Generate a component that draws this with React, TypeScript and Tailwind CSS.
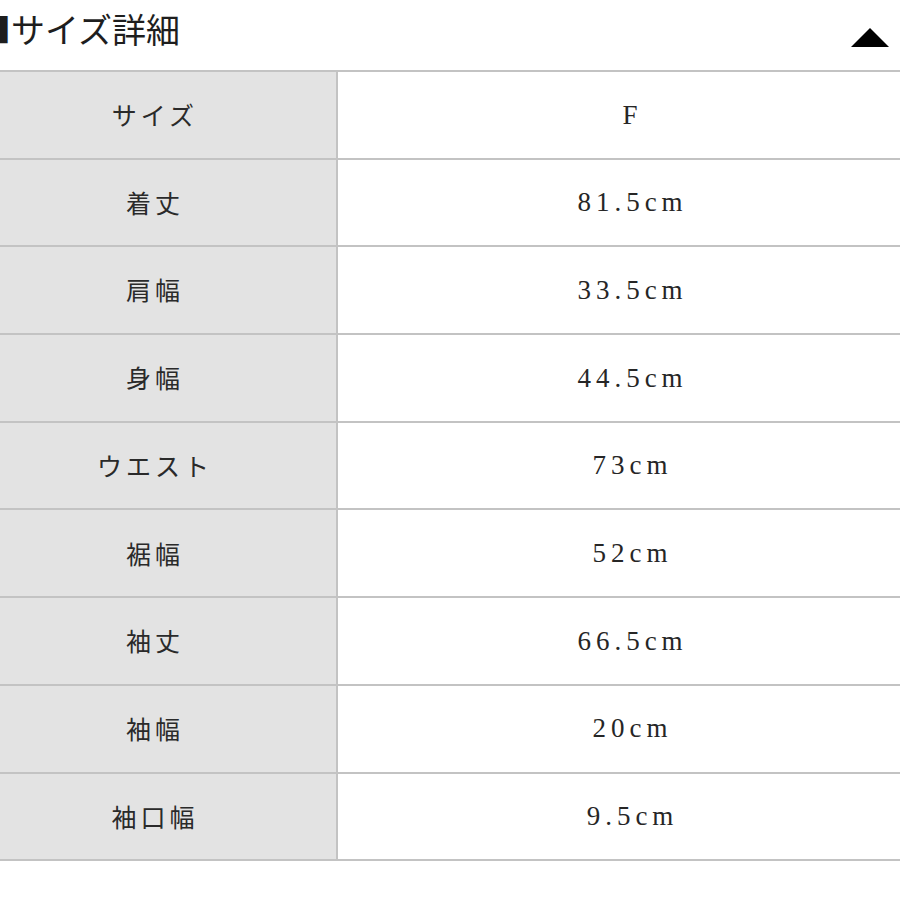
import React from "react";

const rows: [string, string][] = [
  ["サイズ", "F"],
  ["着丈", "81.5cm"],
  ["肩幅", "33.5cm"],
  ["身幅", "44.5cm"],
  ["ウエスト", "73cm"],
  ["裾幅", "52cm"],
  ["袖丈", "66.5cm"],
  ["袖幅", "20cm"],
  ["袖口幅", "9.5cm"],
];

const jp = { fontFamily: '"Liberation Serif", "Noto Sans CJK JP", serif' };

export default function App() {
  return (
    <div className="w-[900px] h-[900px] bg-white overflow-hidden relative" style={jp}>
      <div className="h-[70px] flex items-start justify-between">
        <div
          className="ml-[-23px] mt-[6px] text-[34px] leading-[46px] text-[#1e1e1e] whitespace-nowrap"
          style={{ fontFamily: '"Noto Sans CJK JP", serif' }}
        >
          ■サイズ詳細
        </div>
        <svg width="38" height="19" viewBox="0 0 38 19" className="mt-[28px] mr-[11px]">
          <polygon points="19,0 38,19 0,19" fill="#000" />
        </svg>
      </div>
      <div className="ml-[-30px] w-[952px] border-t-2 border-[#c3c3c3]">
        {rows.map(([k, v]) => (
          <div key={k} className="flex h-[87.7px] border-b-2 border-[#c3c3c3]">
            <div className="w-[368px] bg-[#e3e3e3] border-r-2 border-[#c3c3c3] flex items-center justify-center">
              <span
                className="text-[25px] tracking-[4px] pl-[4px] text-[#2a2a2a]"
                style={{ fontFamily: '"Noto Sans CJK JP", serif' }}
              >
                {k}
              </span>
            </div>
            <div className="flex-1 flex items-center justify-center">
              <span
                className="text-[27px] tracking-[5px] pl-[5px] text-[#262626]"
                style={{ fontFamily: '"Liberation Serif", serif' }}
              >
                {v}
              </span>
            </div>
          </div>
        ))}
      </div>
    </div>
  );
}
